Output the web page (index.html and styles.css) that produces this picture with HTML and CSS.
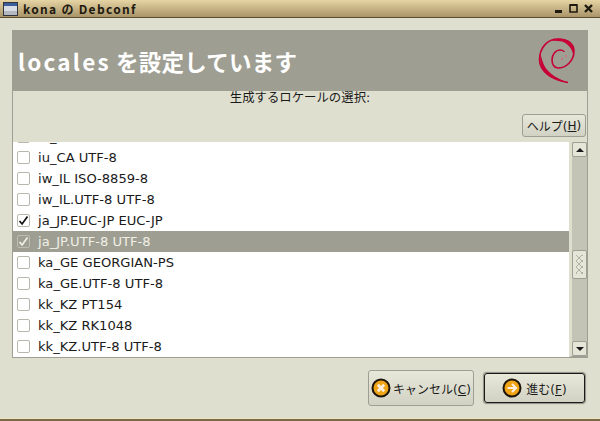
FILE: index.html
```html
<!DOCTYPE html>
<html lang="ja">
<head>
<meta charset="utf-8">
<title>kona の Debconf</title>
<link rel="stylesheet" href="styles.css">
</head>
<body>
<div class="window">
  <header class="titlebar">
    <svg class="win-icon" width="15" height="14" viewBox="0 0 15 14"><rect x="0.5" y="0.5" width="14" height="13" fill="#d8dce4" stroke="#30343c"/><rect x="1" y="1" width="13" height="3" fill="#3c5f9c"/><rect x="1" y="9" width="13" height="4" fill="#b4b8c0"/></svg>
    <span class="title-text">kona の Debconf</span>
    <span class="win-controls">
      <svg width="9" height="9" viewBox="0 0 9 9"><rect x="1" y="6" width="7" height="3" fill="#1e1a10"/></svg>
      <svg width="9" height="9" viewBox="0 0 9 9"><path d="M1 1h7v7H1z" fill="none" stroke="#1e1a10" stroke-width="1.6"/><rect x="1" y="0" width="7" height="2" fill="#1e1a10"/></svg>
      <svg width="9" height="9" viewBox="0 0 9 9"><path d="M1 1l7 7M8 1L1 8" stroke="#1e1a10" stroke-width="2.4"/></svg>
    </span>
  </header>
  <main class="content">
    <div class="banner">
      <h1 class="banner-title"><span class="banner-latin">locales</span> <span class="banner-cjk">を設定しています</span></h1>
      <svg class="swirl" width="38" height="48" viewBox="0 0 38 48"><path d="M30 45.5C14 43 1.5 34 1.5 23C1.5 10 10 2 20 2C30 2 36 7 36 14C36 24 28 31 20 31C16 31 14 27 14 23C14 17 18 13 22 13C24 13 26 14 26 15" fill="none" stroke="#c70036" stroke-width="1.6"/><path d="M2.5 17C1 26 4 35 12 40C17 43 24 45 30 45.5C21 42.5 11 37 6.5 29C4.5 25 3.5 21 2.5 17Z" fill="#c70036"/><path d="M11 4C17 1 26 1 31 4C35.5 8 37 14 35.5 20C35 13 31 7 24 4.5C19 3.5 15 3.5 11 4Z" fill="#c70036"/><circle cx="24" cy="22" r="1" fill="#cf6a80"/><circle cx="28" cy="19" r="1" fill="#cf6a80"/></svg>
    </div>
    <div class="panel">
      <p class="prompt">生成するロケールの選択:</p>
      <div class="help-row">
        <button class="btn help-btn">ヘルプ(<u>H</u>)</button>
      </div>
      <div class="list-frame">
        <div class="viewport">
          <ul class="rows">
            <li class="row"><span class="check"></span>iu_CA</li>
            <li class="row"><span class="check"></span>iu_CA UTF-8</li>
            <li class="row"><span class="check"></span>iw_IL ISO-8859-8</li>
            <li class="row"><span class="check"></span>iw_IL.UTF-8 UTF-8</li>
            <li class="row"><span class="check"><svg class="tick" width="11" height="11" viewBox="0 0 11 11"><path d="M1.5 6l2.6 3L9.5 1.5" fill="none" stroke="currentColor" stroke-width="1.7"/></svg></span>ja_JP.EUC-JP EUC-JP</li>
            <li class="row selected"><span class="check"><svg class="tick" width="11" height="11" viewBox="0 0 11 11"><path d="M1.5 6l2.6 3L9.5 1.5" fill="none" stroke="currentColor" stroke-width="1.7"/></svg></span>ja_JP.UTF-8 UTF-8</li>
            <li class="row"><span class="check"></span>ka_GE GEORGIAN-PS</li>
            <li class="row"><span class="check"></span>ka_GE.UTF-8 UTF-8</li>
            <li class="row"><span class="check"></span>kk_KZ PT154</li>
            <li class="row"><span class="check"></span>kk_KZ RK1048</li>
            <li class="row"><span class="check"></span>kk_KZ.UTF-8 UTF-8</li>
          </ul>
        </div>
        <div class="scrollbar">
          <div class="sb-btn"><span class="arrow-up"></span></div>
          <div class="track">
            <div class="thumb">
              <svg width="7" height="19" viewBox="0 0 7 19"><defs><pattern id="grip" width="6" height="6" patternUnits="userSpaceOnUse"><path d="M0 0L6 6M6 0L0 6" stroke="#b0b0a4" stroke-width="1"/></pattern></defs><rect width="7" height="19" fill="url(#grip)"/></svg>
            </div>
          </div>
          <div class="sb-btn"><span class="arrow-down"></span></div>
        </div>
      </div>
    </div>
    <div class="actions">
      <button class="btn action-btn cancel">
        <svg width="20" height="20" viewBox="0 0 20 20"><circle cx="10" cy="10" r="8.5" fill="#efa416" stroke="#1c1408" stroke-width="2"/><path d="M6.8 6.8l6.4 6.4M13.2 6.8l-6.4 6.4" stroke="#fbeedd" stroke-width="2.8"/></svg>
        <span>キャンセル(<u>C</u>)</span>
      </button>
      <button class="btn action-btn forward">
        <svg width="20" height="20" viewBox="0 0 20 20"><circle cx="10" cy="10" r="8.5" fill="#efa416" stroke="#1c1408" stroke-width="2"/><path d="M5.5 10h8M10 6l4 4-4 4" fill="none" stroke="#fbeedd" stroke-width="2.2"/></svg>
        <span>進む(<u>F</u>)</span>
      </button>
    </div>
  </main>
  <div class="bottom-edge"></div>
</div>
</body>
</html>
```
FILE: styles.css
```css
* { box-sizing: border-box; }
html, body { margin: 0; padding: 0; }
body {
  width: 600px;
  height: 421px;
  overflow: hidden;
  font-family: "DejaVu Sans", "Noto Sans CJK JP", sans-serif;
  font-size: 12px;
  color: #1a1a1a;
  background: #dfdfd0;
}
.window { display: flex; flex-direction: column; height: 421px; }
.titlebar {
  height: 18px;
  display: flex;
  align-items: center;
  padding: 0 3px;
  background: linear-gradient(#e6d4a4, #a89468);
  border-bottom: 1px solid #5c4c30;
  flex: none;
}
.win-icon { flex: none; margin-right: 5px; }
.title-text { font-family: "Noto Sans CJK JP", sans-serif; font-weight: 700; font-size: 12px; letter-spacing: 1.3px; color: #1e1a10; flex: 1; }
.win-controls { display: flex; gap: 6px; margin-right: 4px; }
.content { flex: 1; display: flex; flex-direction: column; padding: 12px 12px 0; min-height: 0; }
.banner {
  height: 61px;
  background: #9e9e92;
  display: flex;
  align-items: center;
  justify-content: space-between;
  padding: 0 12px 0 6px;
  flex: none;
}
.banner-title { margin: 0; font-family: "Noto Sans CJK JP", sans-serif; font-size: 22.5px; font-weight: 700; color: #fff; }
.banner-latin { letter-spacing: 2.2px; }
.banner-cjk { letter-spacing: 0.25px; }
.swirl { flex: none; }
.panel {
  height: 267px;
  border-left: 1px solid #9e9e92;
  border-right: 1px solid #9e9e92;
  border-bottom: 1px solid #9e9e92;
  display: flex;
  flex-direction: column;
  flex: none;
}
.prompt { margin: 0; height: 14px; line-height: 14px; text-align: center; font-size: 12.4px; }
.help-row { display: flex; justify-content: flex-end; padding: 9px 1px 0 0; height: 37px; flex: none; }
.btn {
  font-family: inherit;
  font-size: 12px;
  color: #1a1a1a;
  background: linear-gradient(#e8e8da, #d2d2c4);
  border: 1px solid #9e9e92;
  border-radius: 3px;
  padding: 0;
  display: flex;
  align-items: center;
  justify-content: center;
}
.help-btn { width: 64px; height: 23px; }
.list-frame { flex: 1; display: flex; min-height: 0; }
.viewport { flex: 1; overflow: hidden; background: #fff; min-width: 0; }
.rows { list-style: none; margin: -16px 0 0; padding: 0; }
.row { height: 21px; display: flex; align-items: center; padding-left: 4px; white-space: nowrap; font-size: 13.1px; }
.row.selected { background: #9e9e92; color: #f0f0e6; }
.check {
  width: 13px;
  height: 13px;
  margin-right: 8px;
  border: 1px solid #b8b8ac;
  border-radius: 2px;
  background: #fff;
  display: flex;
  align-items: center;
  justify-content: center;
  color: #111;
  flex: none;
}
.row.selected .check { background: #9e9e92; border-color: #bcbcb0; color: #f0f0e6; }
.scrollbar {
  width: 18px;
  flex: none;
  background: #c4c4b6;
  border: 1px solid #9e9e92;
  border-width: 0 0 1px 1px;
  border-left: 3px solid #dfdfd0;
  display: flex;
  flex-direction: column;
}
.sb-btn {
  height: 15px;
  flex: none;
  background: #e6e6d8;
  border: 1px solid #9e9e92;
  border-radius: 2px;
  display: flex;
  align-items: center;
  justify-content: center;
}
.arrow-up, .arrow-down { width: 0; height: 0; border-left: 4px solid transparent; border-right: 4px solid transparent; }
.arrow-up { border-bottom: 4px solid #1a1a1a; }
.arrow-down { border-top: 4px solid #1a1a1a; }
.track { flex: 1; padding-top: 93px; }
.thumb {
  height: 29px;
  background: #e6e6d8;
  border: 1px solid #9e9e92;
  border-radius: 2px;
  display: flex;
  align-items: center;
  justify-content: center;
}
.actions { flex: 1; display: flex; justify-content: flex-end; align-items: center; gap: 10px; padding: 0 3px 0 0; }
.action-btn { gap: 2px; }
.cancel { width: 106px; height: 36px; }
.forward { width: 101px; height: 30px; border: 1px solid #1a1a1a; box-shadow: 0 0 1px 1px rgba(40, 40, 30, 0.45); gap: 4px; }
.bottom-edge { height: 3px; background: #7a6a48; border-top: 1px solid #f0e4c0; flex: none; }
```
